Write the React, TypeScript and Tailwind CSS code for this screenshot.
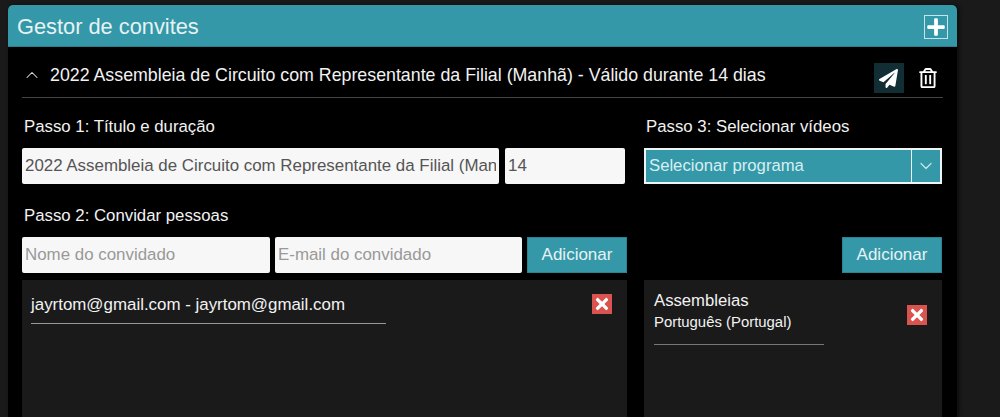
import React from 'react';
import { ChevronUp, ChevronDown } from 'lucide-react';
import { FaPaperPlane, FaRegTrashAlt, FaPlus, FaTimes } from 'react-icons/fa';

const inputClass =
  'h-9 min-w-0 rounded-[2px] bg-[#f7f7f7] px-[3px] text-[16.9px] text-[#555] placeholder:text-[#999] outline-none';

const addButtonClass =
  'h-9 w-[100px] shrink-0 bg-[#3498a8] text-[17px] text-[#e6f2f4] border border-[#2b8494]';

const labelClass = 'ml-[2px] text-[16.8px] leading-5 text-[#f2f2f2]';

const RemoveButton = () => (
  <button className="flex h-5 w-5 shrink-0 items-center justify-center bg-[#d9534f] text-white">
    <FaTimes size={18} />
  </button>
);

export default function App() {
  return (
    <div className="h-[417px] overflow-hidden bg-[#1a1a1a] pl-2 pt-[5px] font-['Liberation_Sans',Arial,sans-serif]">
      <div className="h-[412px] w-[949px] overflow-hidden rounded-t-[5px] bg-black shadow-[2px_0_4px_rgba(0,0,0,0.6)]">
        {/* Cabeçalho */}
        <div className="flex h-[42px] items-center justify-between border-b border-[#2b7f8d] bg-[#3498a8] pl-[9px] pr-[9px] pt-[2px]">
          <h1 className="text-[21.8px] leading-none text-[#e6f2f4]">Gestor de convites</h1>
          <button className="flex h-6 w-6 items-center justify-center border border-[#c5e3e8] text-white">
            <FaPlus size={20} />
          </button>
        </div>

        <div className="px-[14px]">
          {/* Título do convite */}
          <div className="flex h-[51px] items-center justify-between border-b border-[#444] pt-[6px]">
            <div className="flex items-center">
              <ChevronUp size={20} strokeWidth={1.25} className="mr-[8px] text-[#ddd]" />
              <span className="text-[17.8px] text-[#f2f2f2]">
                2022 Assembleia de Circuito com Representante da Filial (Manhã) - Válido durante 14 dias
              </span>
            </div>
            <div className="mt-[6px] flex items-center gap-[14.5px] pr-[5px]">
              <button className="flex h-[30px] w-[30px] items-center justify-center bg-[#122e35] text-white">
                <FaPaperPlane size={19} />
              </button>
              <button className="text-white">
                <FaRegTrashAlt size={20} />
              </button>
            </div>
          </div>

          <div className="flex gap-[17px]">
            {/* Passos 1 e 2 */}
            <div className="w-[605px] shrink-0">
              <p className={`mt-[19px] h-[31px] ${labelClass}`}>Passo 1: Título e duração</p>
              <div className="flex gap-[6px]">
                <input
                  className={`${inputClass} w-[477px]`}
                  defaultValue="2022 Assembleia de Circuito com Representante da Filial (Manhã) - Válido durante 14 dias"
                />
                <input className={`${inputClass} w-[120px]`} defaultValue="14" />
              </div>
              <p className={`mt-[22px] h-[31px] ${labelClass}`}>Passo 2: Convidar pessoas</p>
              <div className="flex gap-[5px]">
                <input className={`${inputClass} w-[248px]`} placeholder="Nome do convidado" />
                <input className={`${inputClass} w-[247px]`} placeholder="E-mail do convidado" />
                <button className={addButtonClass}>Adicionar</button>
              </div>
              <div className="mt-[7px] h-[137px] bg-[#1a1a1a] pl-[9px] pr-[15px] pt-[14px]">
                <div className="flex items-start justify-between">
                  <div className="w-[355px] border-b border-[#999] pb-[9px] pt-[1px] text-[16.9px] leading-[19px] text-[#f2f2f2]">
                    jayrtom@gmail.com - jayrtom@gmail.com
                  </div>
                  <RemoveButton />
                </div>
              </div>
            </div>

            {/* Passo 3 */}
            <div className="w-[298px] shrink-0">
              <p className={`mt-[19px] h-[31px] ${labelClass}`}>Passo 3: Selecionar vídeos</p>
              <div className="flex h-9 items-center border-2 border-[#eef5f6] bg-[#3498a8] text-[16.7px] text-[#d9eef1]">
                <span className="flex-1 pl-[3px]">Selecionar programa</span>
                <span className="flex h-full w-[29px] items-center justify-center border-l border-[#eef5f6]">
                  <ChevronDown size={20} strokeWidth={1.5} className="text-[#c4e4e9]" />
                </span>
              </div>
              <div className="mt-[53px] flex justify-end">
                <button className={addButtonClass}>Adicionar</button>
              </div>
              <div className="mt-[7px] h-[137px] bg-[#1a1a1a] pl-[10px] pr-[15px] pt-[11px]">
                <div className="flex items-start justify-between">
                  <div className="w-[170px] border-b border-[#777] pb-[12px] text-[#f2f2f2]">
                    <div className="text-[16.7px] leading-[19px]">Assembleias</div>
                    <div className="mt-[3px] text-[14.9px] leading-[19px]">Português (Portugal)</div>
                  </div>
                  <div className="pt-[14px]">
                    <RemoveButton />
                  </div>
                </div>
              </div>
            </div>
          </div>
        </div>
      </div>
    </div>
  );
}
